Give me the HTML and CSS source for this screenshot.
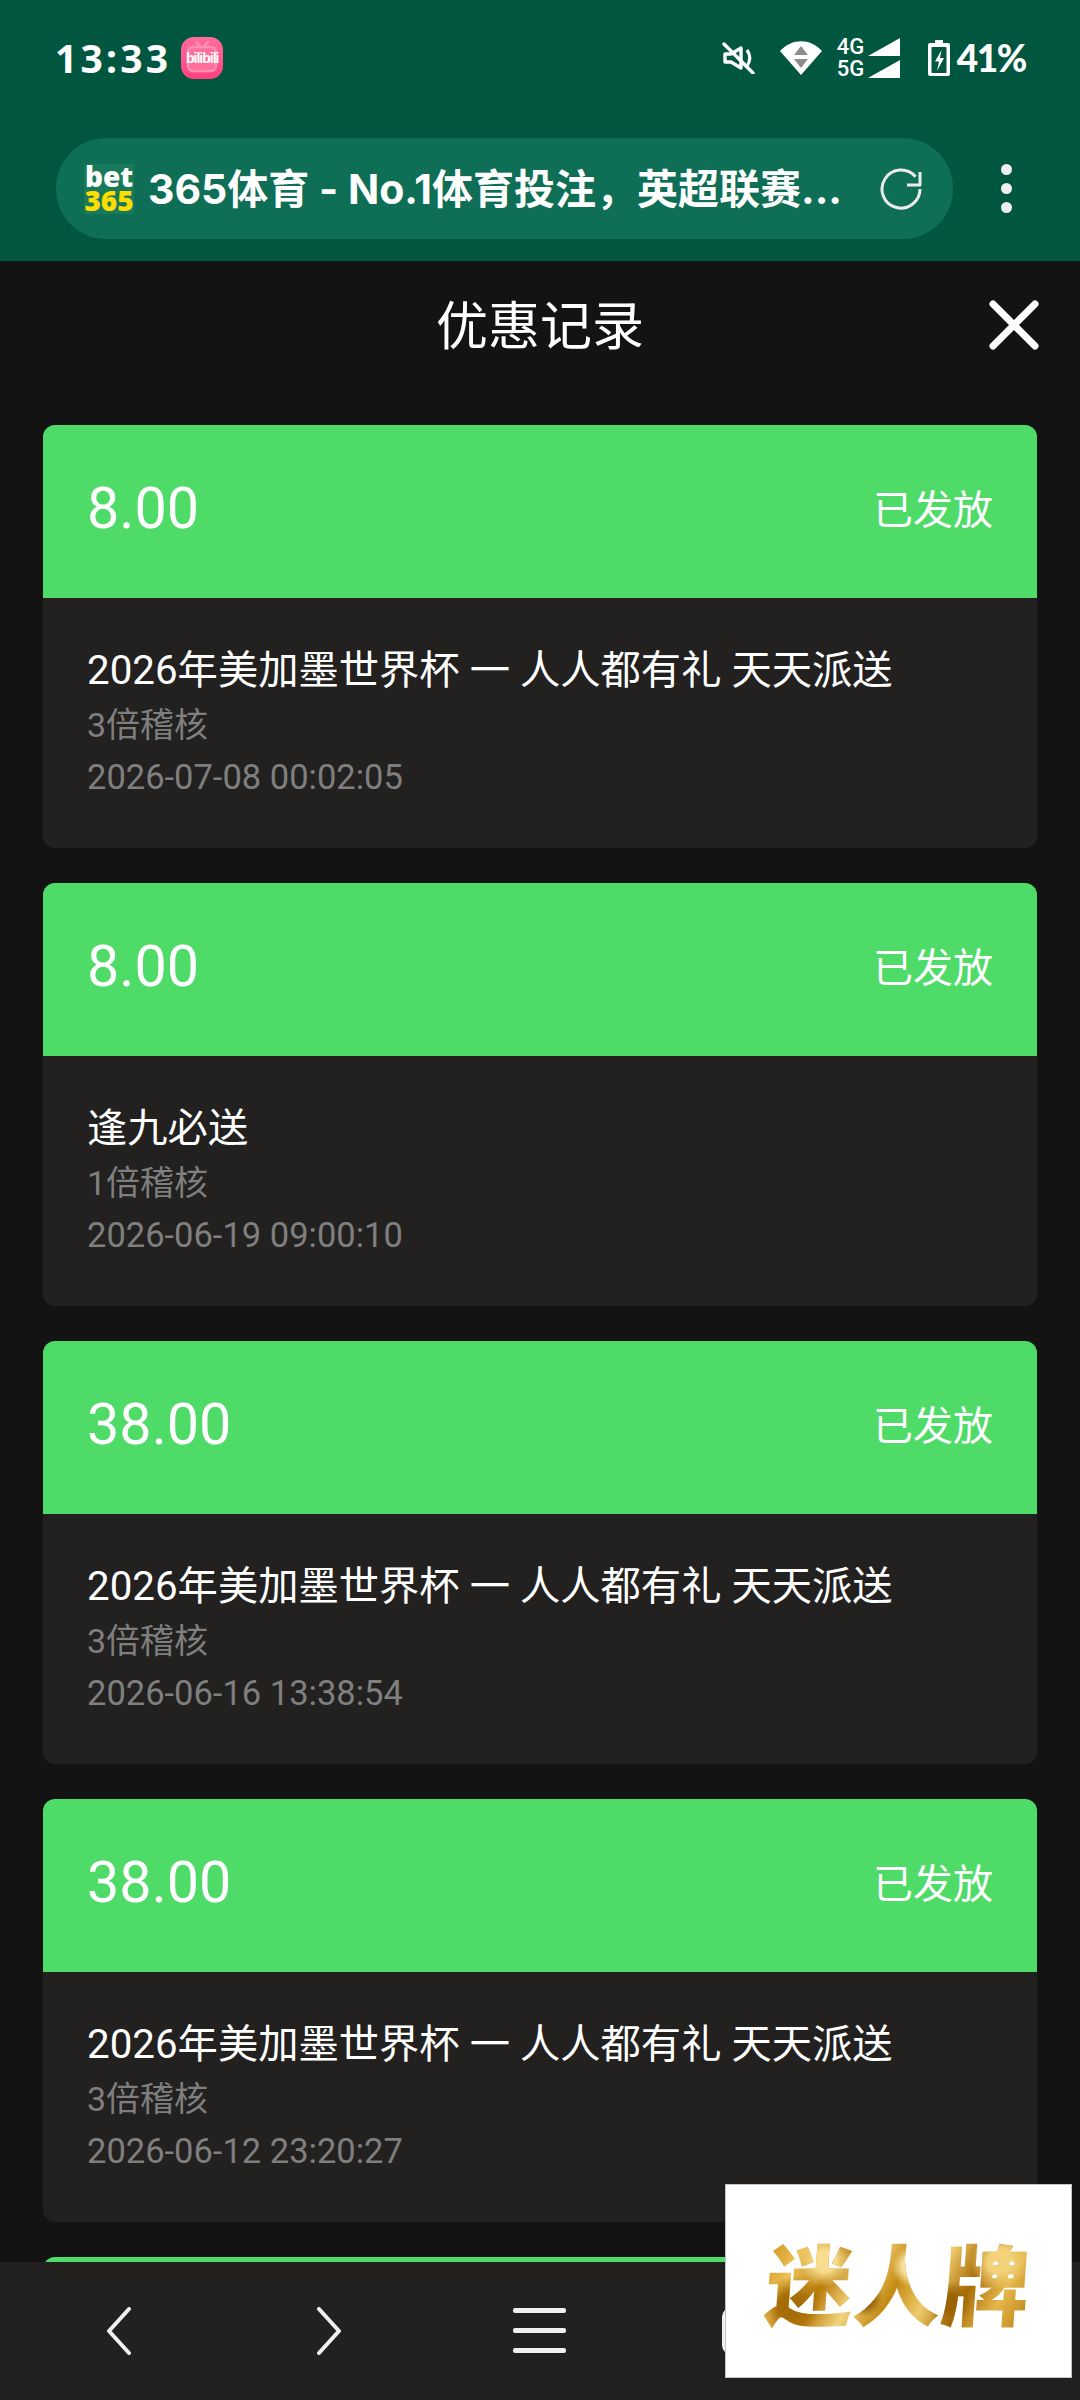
FILE: index.html
```html
<!DOCTYPE html>
<html lang="zh-CN">
<head>
<meta charset="utf-8">
<title>优惠记录</title>
<link rel="stylesheet" href="styles.css">
</head>
<body>
<div class="screen">
  <header class="chrome">
    <div class="status">
      <div class="status-left">
        <span class="time">13:33</span>
        <span class="bili">
          <svg class="bili-tv" viewBox="0 0 42 42" fill="none" stroke="#ff8fb3" stroke-width="2.5" stroke-linecap="round">
            <path d="M15 5l4 4M27 5l-4 4"/>
            <rect x="7" y="10" width="28" height="24" rx="5" fill="#ff6f9c"/>
          </svg>
          <span class="bili-text">bilibili</span>
        </span>
      </div>
      <div class="status-right">
        <svg class="ic-mute" viewBox="0 0 33 32" fill="none" stroke="#fff">
          <path d="M3 12h6l10-6v20L9 20H3z" stroke-width="3.4" stroke-linejoin="round"/>
          <path d="M25 8c3.5 5 3.5 11 0 16" stroke-width="3.2"/>
          <path d="M2 2l29 29" stroke-width="3.4" stroke-linecap="round"/>
        </svg>
        <svg class="ic-wifi" viewBox="0 0 42 34">
          <path d="M0 10C12-3 30-3 42 10L21 34z" fill="#fff"/>
          <path d="M21 5l7 9H14z" fill="#8c8c8c"/>
          <path d="M21 27l7-9H14z" fill="#8c8c8c"/>
        </svg>
        <div class="net">
          <span>4G</span>
          <span>5G</span>
        </div>
        <div class="bars">
          <svg class="ic-bar" viewBox="0 0 32 18"><path d="M32 0v18H0z" fill="#fff"/></svg>
          <svg class="ic-bar" viewBox="0 0 32 18"><path d="M32 0v18H0z" fill="#fff"/></svg>
        </div>
        <svg class="ic-batt" viewBox="0 0 22 36">
          <path d="M7 0h8v3h5a2 2 0 0 1 2 2v29a2 2 0 0 1-2 2H2a2 2 0 0 1-2-2V5a2 2 0 0 1 2-2h5z" fill="#fff"/>
          <rect x="3.5" y="7" width="15" height="26" rx="1" fill="#00563f"/>
          <path d="M13.5 10L7 21.5h4L9 31l7-13h-4z" fill="#fff"/>
        </svg>
        <span class="pct">41%</span>
      </div>
    </div>
    <div class="toolbar">
      <div class="pill">
        <span class="bet"><span class="bet-w">bet</span><span class="bet-y">365</span></span>
        <span class="pill-title">365体育 - No.1体育投注，英超联赛...</span>
        <svg class="ic-reload" viewBox="0 0 42 42" fill="none" stroke="#ececec" stroke-width="3">
          <path d="M35.5 8.8A19 19 0 1 0 40 21"/>
          <path d="M40 4v13H27" stroke-linejoin="round"/>
        </svg>
      </div>
      <div class="kebab"><i></i><i></i><i></i></div>
    </div>
  </header>

  <main class="modal">
    <div class="modal-head">
      <h1 class="modal-title">优惠记录</h1>
      <svg class="ic-close" viewBox="0 0 50 50" stroke="#fff" stroke-width="7" stroke-linecap="round">
        <path d="M4 4l42 42M46 4L4 46"/>
      </svg>
    </div>
    <div class="list">
      <article class="card">
        <div class="card-head"><span class="amount">8.00</span><span class="state">已发放</span></div>
        <div class="card-body">
          <div class="name">2026年美加墨世界杯 一 人人都有礼 天天派送</div>
          <div class="sub">3倍稽核</div>
          <div class="date">2026-07-08 00:02:05</div>
        </div>
      </article>
      <article class="card">
        <div class="card-head"><span class="amount">8.00</span><span class="state">已发放</span></div>
        <div class="card-body">
          <div class="name">逢九必送</div>
          <div class="sub">1倍稽核</div>
          <div class="date">2026-06-19 09:00:10</div>
        </div>
      </article>
      <article class="card">
        <div class="card-head"><span class="amount">38.00</span><span class="state">已发放</span></div>
        <div class="card-body">
          <div class="name">2026年美加墨世界杯 一 人人都有礼 天天派送</div>
          <div class="sub">3倍稽核</div>
          <div class="date">2026-06-16 13:38:54</div>
        </div>
      </article>
      <article class="card">
        <div class="card-head"><span class="amount">38.00</span><span class="state">已发放</span></div>
        <div class="card-body">
          <div class="name">2026年美加墨世界杯 一 人人都有礼 天天派送</div>
          <div class="sub">3倍稽核</div>
          <div class="date">2026-06-12 23:20:27</div>
        </div>
      </article>
      <article class="card">
        <div class="card-head"></div>
      </article>
    </div>
  </main>

  <nav class="navbar">
    <svg class="nav-chev" viewBox="0 0 26 48" fill="none" stroke="#f0f0f0" stroke-width="4" stroke-linecap="round" stroke-linejoin="round"><path d="M23 2L3 24l20 22" /></svg>
    <svg class="nav-chev nav-next" viewBox="0 0 26 48" fill="none" stroke="#f0f0f0" stroke-width="4" stroke-linecap="round" stroke-linejoin="round"><path d="M3 2l20 22L3 46"/></svg>
    <div class="nav-menu"><i></i><i></i><i></i></div>
    <span class="nav-tabs"></span>
  </nav>

  <aside class="promo"><span class="promo-text">迷人牌</span></aside>
</div>
</body>
</html>
```

FILE: styles.css
```css
* { box-sizing: border-box; }
html, body { margin: 0; padding: 0; }
body {
  background: #141314;
  color: #fff;
  font-family: Roboto, "Noto Sans CJK SC", sans-serif;
}
.screen {
  position: relative;
  width: 1080px;
  height: 2400px;
  overflow: hidden;
  background: #141314;
}

/* Browser chrome */
.chrome { height: 261px; background: #00563f; }
.status {
  height: 138px;
  padding: 37px 54px 0 55px;
  display: flex;
  justify-content: space-between;
  align-items: flex-start;
}
.status-left { display: flex; align-items: center; gap: 10px; height: 42px; }
.time {
  font-family: "Noto Sans", sans-serif;
  font-weight: 700;
  font-size: 39px;
  line-height: 42px;
  letter-spacing: 3.2px;
}
.bili {
  position: relative;
  width: 42px;
  height: 42px;
  border-radius: 13px;
  background: linear-gradient(#ff6d9b, #ff4180);
  display: flex;
  align-items: center;
  justify-content: center;
  overflow: hidden;
}
.bili-tv { position: absolute; left: 0; top: 0; width: 42px; height: 42px; }
.bili-text {
  position: relative;
  font-family: "Liberation Sans", sans-serif;
  font-size: 14px;
  font-weight: 700;
  color: #fff;
  letter-spacing: -1px;
}
.status-right { display: flex; align-items: center; height: 42px; }
.ic-mute { width: 33px; height: 32px; margin-right: 25px; }
.ic-wifi { width: 42px; height: 34px; margin-right: 15px; }
.net {
  display: flex;
  flex-direction: column;
  font-family: Roboto, sans-serif;
  font-size: 22px;
  font-weight: 500;
  line-height: 22px;
  width: 31px;
}
.bars { display: flex; flex-direction: column; gap: 4px; margin-right: 28px; }
.ic-bar { width: 32px; height: 18px; display: block; }
.ic-batt { width: 22px; height: 36px; margin-right: 7px; }
.pct {
  font-family: Lato, sans-serif;
  font-weight: 900;
  font-size: 37px;
  line-height: 42px;
  letter-spacing: -1.4px;
}

.toolbar { display: flex; align-items: center; padding-left: 56px; }
.pill {
  width: 897px;
  height: 101px;
  border-radius: 50px;
  background: #0e6e56;
  display: flex;
  align-items: center;
  padding-left: 28px;
}
.bet {
  width: 50px;
  height: 50px;
  background: #187a5a;
  display: flex;
  flex-direction: column;
  align-items: center;
  font-family: "Open Sans", sans-serif;
  font-weight: 800;
  font-size: 28px;
  line-height: 24px;
  flex: none;
}
.bet-w { color: #fff; }
.bet-y { color: #ffdd00; }
.pill-title {
  margin-left: 14px;
  width: 700px;
  white-space: nowrap;
  font-family: Inter, "Noto Sans CJK SC", sans-serif;
  font-weight: 700;
  font-size: 41px;
  line-height: 50px;
}
.ic-reload { width: 42px; height: 42px; margin-left: 32px; flex: none; }
.kebab {
  margin-left: 48px;
  display: flex;
  flex-direction: column;
  gap: 8px;
}
.kebab i {
  display: block;
  width: 11px;
  height: 11px;
  border-radius: 50%;
  background: #eee;
}

/* Modal */
.modal-head {
  height: 126px;
  padding-bottom: 3px;
  display: flex;
  align-items: center;
  justify-content: center;
  position: relative;
}
.modal-title {
  margin: 0;
  font-family: "Noto Sans CJK SC", sans-serif;
  font-weight: 400;
  font-size: 52px;
  line-height: 60px;
}
.ic-close {
  position: absolute;
  right: 41px;
  top: 39px;
  width: 50px;
  height: 50px;
}
.list {
  padding: 38px 43px 0;
  display: flex;
  flex-direction: column;
  gap: 35px;
}
.card {
  height: 423px;
  flex: none;
  border-radius: 12px;
  overflow: hidden;
  background: #222120;
}
.card-head {
  height: 173px;
  background: #4edb68;
  display: flex;
  align-items: center;
  justify-content: space-between;
  padding: 0 44px 6px 44px;
}
.amount { font-size: 57.5px; line-height: 70px; }
.state {
  font-family: "Noto Sans CJK SC", sans-serif;
  font-size: 40px;
  line-height: 50px;
  margin-bottom: 3px;
}
.card-body { padding: 47px 44px 0; }
.name {
  font-family: Roboto, "Noto Sans CJK SC", sans-serif;
  font-size: 40.3px;
  line-height: 52px;
  white-space: nowrap;
}
.sub {
  font-family: Roboto, "Noto Sans CJK SC", sans-serif;
  font-size: 34px;
  line-height: 52px;
  margin-top: 2px;
  color: #7f7f7f;
}
.date {
  font-size: 34.5px;
  line-height: 52px;
  color: #7f7f7f;
}

/* Overlay bars */
.navbar {
  position: absolute;
  left: 0;
  right: 0;
  bottom: 0;
  height: 138px;
  background: #222120;
}
.nav-chev {
  position: absolute;
  left: 106px;
  top: 45px;
  width: 26px;
  height: 48px;
}
.nav-next { left: 316px; }
.nav-menu {
  position: absolute;
  left: 513px;
  top: 46px;
  width: 53px;
  display: flex;
  flex-direction: column;
  gap: 15px;
}
.nav-menu i {
  display: block;
  height: 5px;
  border-radius: 2px;
  background: #f0f0f0;
}
.nav-tabs {
  position: absolute;
  left: 722px;
  top: 45px;
  width: 50px;
  height: 48px;
  border: 4px solid #f0f0f0;
  border-radius: 10px;
}
.promo {
  position: absolute;
  left: 725px;
  top: 2184px;
  width: 347px;
  height: 194px;
  background: #fff;
  border: 1px solid #c4c4c4;
  display: flex;
  align-items: center;
  justify-content: center;
}
.promo-text {
  display: block;
  font-family: "Noto Sans CJK SC", sans-serif;
  font-weight: 900;
  font-size: 88px;
  line-height: 100px;
  white-space: nowrap;
  transform: skewX(-4deg);
  background:
    radial-gradient(circle at 22% 30%, #f7dd8d 0 5%, transparent 12%),
    radial-gradient(circle at 38% 68%, #8f5a04 0 4%, transparent 10%),
    radial-gradient(circle at 55% 35%, #f9e3a0 0 6%, transparent 13%),
    radial-gradient(circle at 70% 72%, #9a6204 0 4%, transparent 11%),
    radial-gradient(circle at 88% 30%, #f3d27a 0 5%, transparent 12%),
    radial-gradient(circle at 10% 75%, #a56c08 0 5%, transparent 12%),
    linear-gradient(115deg, #c98a10 0%, #eec35a 14%, #b87a08 26%, #f2d47e 38%, #c48a12 50%, #efcb6c 62%, #a86c06 74%, #e6b84c 86%, #b87d10 100%);
  -webkit-background-clip: text;
  background-clip: text;
  color: transparent;
}
```
